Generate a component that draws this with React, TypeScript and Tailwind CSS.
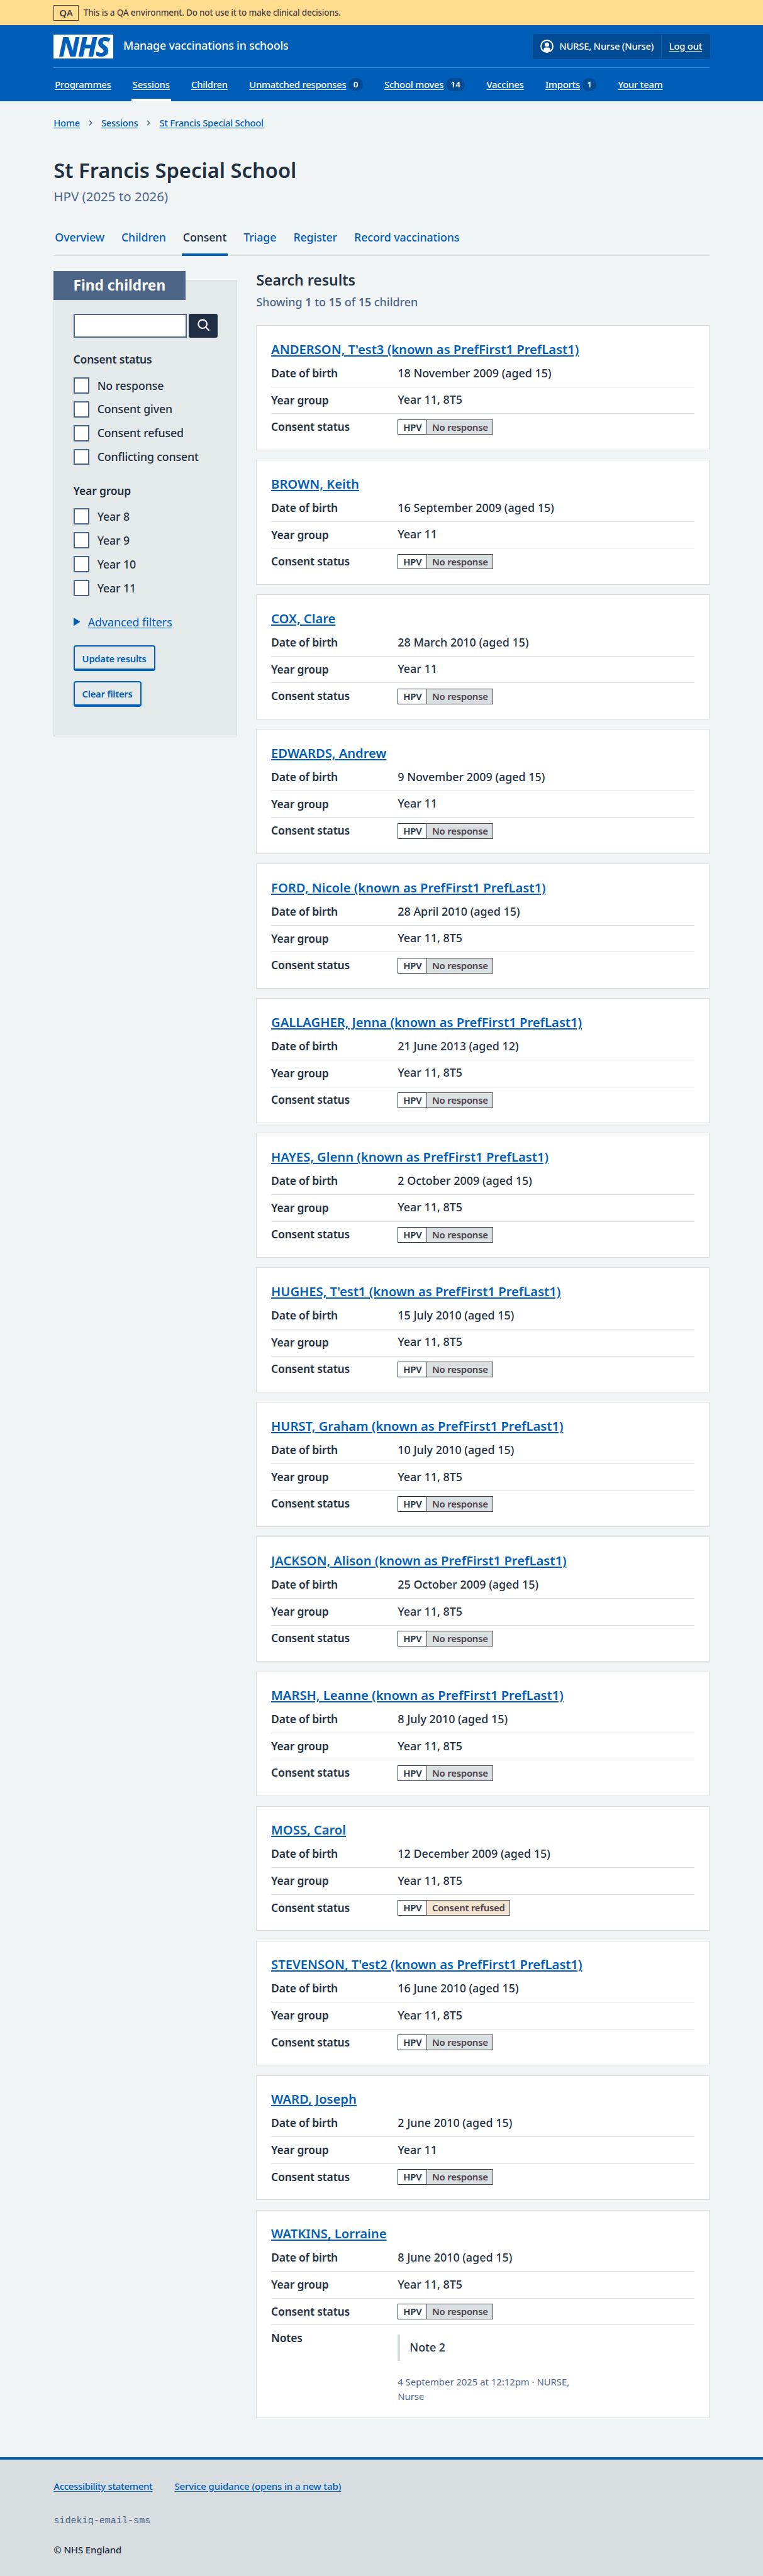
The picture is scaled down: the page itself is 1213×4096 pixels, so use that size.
import type { ReactNode } from "react";

type Child = {
  name: string;
  dob: string;
  year: string;
  status?: "refused";
  note?: { text: string; meta: string };
};

const children: Child[] = [
  { name: "ANDERSON, T'est3 (known as PrefFirst1 PrefLast1)", dob: "18 November 2009 (aged 15)", year: "Year 11, 8T5" },
  { name: "BROWN, Keith", dob: "16 September 2009 (aged 15)", year: "Year 11" },
  { name: "COX, Clare", dob: "28 March 2010 (aged 15)", year: "Year 11" },
  { name: "EDWARDS, Andrew", dob: "9 November 2009 (aged 15)", year: "Year 11" },
  { name: "FORD, Nicole (known as PrefFirst1 PrefLast1)", dob: "28 April 2010 (aged 15)", year: "Year 11, 8T5" },
  { name: "GALLAGHER, Jenna (known as PrefFirst1 PrefLast1)", dob: "21 June 2013 (aged 12)", year: "Year 11, 8T5" },
  { name: "HAYES, Glenn (known as PrefFirst1 PrefLast1)", dob: "2 October 2009 (aged 15)", year: "Year 11, 8T5" },
  { name: "HUGHES, T'est1 (known as PrefFirst1 PrefLast1)", dob: "15 July 2010 (aged 15)", year: "Year 11, 8T5" },
  { name: "HURST, Graham (known as PrefFirst1 PrefLast1)", dob: "10 July 2010 (aged 15)", year: "Year 11, 8T5" },
  { name: "JACKSON, Alison (known as PrefFirst1 PrefLast1)", dob: "25 October 2009 (aged 15)", year: "Year 11, 8T5" },
  { name: "MARSH, Leanne (known as PrefFirst1 PrefLast1)", dob: "8 July 2010 (aged 15)", year: "Year 11, 8T5" },
  { name: "MOSS, Carol", dob: "12 December 2009 (aged 15)", year: "Year 11, 8T5", status: "refused" },
  { name: "STEVENSON, T'est2 (known as PrefFirst1 PrefLast1)", dob: "16 June 2010 (aged 15)", year: "Year 11, 8T5" },
  { name: "WARD, Joseph", dob: "2 June 2010 (aged 15)", year: "Year 11" },
  {
    name: "WATKINS, Lorraine",
    dob: "8 June 2010 (aged 15)",
    year: "Year 11, 8T5",
    note: { text: "Note 2", meta: "4 September 2025 at 12:12pm · NURSE, Nurse" },
  },
];

const navItems: { label: string; count?: string; active?: boolean }[] = [
  { label: "Programmes" },
  { label: "Sessions", active: true },
  { label: "Children" },
  { label: "Unmatched responses", count: "0" },
  { label: "School moves", count: "14" },
  { label: "Vaccines" },
  { label: "Imports", count: "1" },
  { label: "Your team" },
];

const tabs = ["Overview", "Children", "Consent", "Triage", "Register", "Record vaccinations"];

function Container({ children: content, className = "" }: { children: ReactNode; className?: string }) {
  return <div className={`mx-auto w-[1042.4px] ${className}`}>{content}</div>;
}

function Banner() {
  return (
    <div className="h-10 bg-[#ffdc8e] text-[#453f47]">
      <Container className="flex h-full items-center">
        <strong className="flex h-[25px] w-[39.5px] items-center justify-center border border-[#453f47] text-[15px] font-semibold">
          QA
        </strong>
        <span className="ml-2 text-[13.5px] tracking-[-0.18px]">
          This is a QA environment. Do not use it to make clinical decisions.
        </span>
      </Container>
    </div>
  );
}

function Logo() {
  return (
    <div className="flex h-[38px] w-[94.7px] items-center justify-center bg-white text-[43px] leading-none font-extrabold tracking-[-2.5px] text-[#005eb8] italic">
      NHS
    </div>
  );
}

function Header() {
  return (
    <header className="h-[121px] bg-[#005eb8] text-white">
      <Container>
        <div className="flex h-[68px] items-center border-b border-[#3f8fe0]">
          <Logo />
          <span className="-mt-[2px] ml-[16px] text-[17.8px] tracking-[-0.18px]">Manage vaccinations in schools</span>
          <div className="-mr-px ml-auto flex h-10 items-center rounded-[4px] bg-[#004b93] text-[14.8px] tracking-[-0.22px]">
            <svg className="ml-[12.5px] h-[21px] w-[21px]" viewBox="0 0 22 22">
              <circle cx="11" cy="11" r="10" fill="none" stroke="white" strokeWidth="2" />
              <circle cx="11" cy="8.3" r="3.6" fill="white" />
              <path d="M5.6 20V16.4a3.2 3.2 0 0 1 3.2-3.2h4.4a3.2 3.2 0 0 1 3.2 3.2V20L11 21.6z" fill="white" />
            </svg>
            <span className="ml-[9px]">NURSE, Nurse (Nurse)</span>
            <span className="ml-[11.5px] h-[38px] w-px bg-[#005eb8]" />
            <a className="mr-[12.5px] ml-[12px] underline underline-offset-[2px]">Log out</a>
          </div>
        </div>
        <nav className="flex h-[53px] gap-[30.4px] text-[14.8px] tracking-[-0.22px]">
          {navItems.map((item) => (
            <div
              key={item.label}
              className={`flex items-center border-y-4 border-t-transparent px-[2px] ${item.active ? "border-b-white" : "border-b-transparent"}`}
            >
              <a className="underline underline-offset-[2px]">{item.label}</a>
              {item.count && (
                <span className="ml-[4px] flex h-[21px] items-center rounded-full bg-[#004b93] px-[7.3px] text-[13.3px] font-semibold tracking-normal">
                  {item.count}
                </span>
              )}
            </div>
          ))}
        </nav>
      </Container>
    </header>
  );
}

function Breadcrumb() {
  const links = ["Home", "Sessions", "St Francis Special School"];
  return (
    <div className="flex items-center pt-[22px] text-[14.8px] leading-6 tracking-[-0.25px] text-[#005eb8]">
      {links.map((link, i) => (
        <div key={link} className="flex items-center">
          {i > 0 && (
            <svg className="mx-[14px] h-[9px] w-[6px]" viewBox="0 0 6 9">
              <path d="M1.2 .8 4.6 4.5 1.2 8.2" fill="none" stroke="#4c6488" strokeWidth="1.6" />
            </svg>
          )}
          <a className="underline underline-offset-[2px]">{link}</a>
        </div>
      ))}
    </div>
  );
}

function Tabs() {
  return (
    <nav className="mt-[22px] flex h-[59px] gap-[23px] border-b border-[#d8dde0] text-[17.8px] tracking-[-0.1px] text-[#005eb8]">
      {tabs.map((tab) => (
        <a
          key={tab}
          className={`-mb-px flex items-center border-y-4 border-t-transparent px-[2px] ${tab === "Consent" ? "border-b-[#005eb8] text-[#212f42]" : "border-b-transparent"}`}
        >
          {tab}
        </a>
      ))}
    </nav>
  );
}

function CheckboxGroup({ legend, options }: { legend: string; options: string[] }) {
  return (
    <fieldset className="mt-[21.3px]">
      <legend className="text-[17.5px] leading-[26px] font-semibold tracking-[-0.2px]">{legend}</legend>
      <div className="mt-[9.5px]">
        {options.map((option) => (
          <label key={option} className="flex h-[37.9px] items-center text-[17.8px] tracking-[-0.15px]">
            <span className="h-[25.6px] w-[25.6px] border-2 border-[#4d6587] bg-white" />
            <span className="ml-[12.5px]">{option}</span>
          </label>
        ))}
      </div>
    </fieldset>
  );
}

function FilterButton({ children: label, className = "" }: { children: ReactNode; className?: string }) {
  return (
    <button
      className={`flex h-[41.7px] items-center rounded-[4px] border-2 border-b-4 border-[#005eb8] px-[12px] pt-[2px] text-[14.8px] font-semibold tracking-[-0.27px] text-[#005eb8] ${className}`}
    >
      {label}
    </button>
  );
}

function Filters() {
  return (
    <aside className="mt-[14px] flex h-[726px] w-[292px] shrink-0 flex-col items-start border border-[#d8dde0] bg-[#e4e9e9] pl-[30.3px]">
      <h2 className="-mt-[15px] -ml-[31.3px] flex h-[45.5px] w-[209.4px] items-center bg-[#4d6587] pl-[31.3px] text-[22.7px] font-bold text-white">
        Find children
      </h2>
      <div className="mt-[22.7px] flex gap-[3.8px]">
        <input className="h-[38px] w-[180px] border-2 border-[#4d6587] bg-white" />
        <button className="flex h-[38px] w-[45.5px] items-center justify-center rounded-[3px] bg-[#212f45]">
          <svg className="h-[22.7px] w-[22.7px]" viewBox="0 0 24 24" fill="none" stroke="white" strokeWidth="2.3" strokeLinecap="round">
            <circle cx="10.7" cy="8.7" r="7.2" />
            <path d="m16 14 5.3 5.3" />
          </svg>
        </button>
      </div>
      <CheckboxGroup
        legend="Consent status"
        options={["No response", "Consent given", "Consent refused", "Conflicting consent"]}
      />
      <CheckboxGroup legend="Year group" options={["Year 8", "Year 9", "Year 10", "Year 11"]} />
      <div className="mt-[21.7px] flex items-center text-[17.8px] leading-[26px] text-[#005eb8]">
        <svg className="h-[13.3px] w-[10.6px]" viewBox="0 0 11 14">
          <path d="M0 0 11 7 0 14z" fill="#005eb8" />
        </svg>
        <span className="ml-[12.5px] font-normal underline underline-offset-[2px]">Advanced filters</span>
      </div>
      <FilterButton className="mt-[24.2px]">Update results</FilterButton>
      <FilterButton className="mt-[15.2px]">Clear filters</FilterButton>
    </aside>
  );
}

function Row({ label, last = false, children: value }: { label: string; last?: boolean; children: ReactNode }) {
  return (
    <div className={`flex ${last ? "" : "h-[42.6px] border-b border-[#d8dde0]"}`}>
      <dt className="w-[201.2px] shrink-0 pt-[6.8px] text-[17.5px] leading-[26px] font-semibold tracking-[-0.2px]">
        {label}
      </dt>
      <dd className="pt-[6.5px] text-[17.9px] leading-[26px]">{value}</dd>
    </div>
  );
}

function StatusTag({ refused }: { refused: boolean }) {
  return (
    <span className="mt-[2px] flex h-[24.6px] text-[14.9px] leading-[22px] font-semibold tracking-[-0.22px]">
      <span className="border border-r-0 border-[#212f42] bg-white px-[8px]">HPV</span>
      <span className={`border border-[#4a4148] px-[7.6px] text-[#4a4148] ${refused ? "bg-[#f3e3d1]" : "bg-[#dadfe1]"}`}>
        {refused ? "Consent refused" : "No response"}
      </span>
    </span>
  );
}

function ChildCard({ child }: { child: Child }) {
  return (
    <article
      className={`border border-[#d8dde0] bg-white px-[22.7px] pt-[22.6px] ${child.note ? "h-[331.6px]" : "h-[198.9px]"}`}
    >
      <h3 className="text-[20.2px] leading-7 font-semibold text-[#005eb8]">
        <a className="underline decoration-2 underline-offset-[2px]">{child.name}</a>
      </h3>
      <dl className="mt-[4.4px]">
        <Row label="Date of birth">{child.dob}</Row>
        <Row label="Year group">{child.year}</Row>
        <Row label="Consent status" last={!child.note}>
          <StatusTag refused={child.status === "refused"} />
        </Row>
        {child.note && (
          <Row label="Notes" last>
            <blockquote className="mt-[8px] flex h-[41.7px] items-center border-l-4 border-[#d8dde0] pb-[2px] pl-[15px]">
              {child.note.text}
            </blockquote>
            <p className="mt-[22.6px] w-[290px] text-[14.85px] leading-[22.7px] font-normal text-[#4c6488]">
              {child.note.meta}
            </p>
          </Row>
        )}
      </dl>
    </article>
  );
}

function Results() {
  return (
    <section className="w-[720.3px]">
      <h2 className="text-[23px] leading-7 font-semibold">Search results</h2>
      <p className="mt-2 text-[17.9px] leading-[26px] text-[#4c6488]">
        Showing <b className="font-semibold">1</b> to <b className="font-semibold">15</b> of{" "}
        <b className="font-semibold">15</b> children
      </p>
      <div className="mt-[24.2px] flex flex-col gap-[15.15px]">
        {children.map((child) => (
          <ChildCard key={child.name} child={child} />
        ))}
      </div>
    </section>
  );
}

function Footer() {
  return (
    <footer className="mt-auto h-[189.4px] border-t-4 border-[#005eb8] bg-[#d8dde0]">
      <Container className="pt-[31.5px] text-[15px] leading-[23px]">
        <div className="flex gap-[35px] text-[#005eb8]">
          <a className="tracking-[-0.33px] underline underline-offset-[2px]">Accessibility statement</a>
          <a className="tracking-[-0.12px] underline underline-offset-[2px]">Service guidance (opens in a new tab)</a>
        </div>
        <p className="mt-[32px] font-['Liberation_Mono',monospace] text-[15.1px] font-normal text-[#4c6488]">
          sidekiq-email-sms
        </p>
        <p className="mt-[22.6px] tracking-[-0.15px]">© NHS England</p>
      </Container>
    </footer>
  );
}

export default function App() {
  return (
    <div className="flex h-[4096px] flex-col overflow-hidden bg-[#f0f4f5] font-['Noto_Sans',sans-serif] font-medium text-[#212f42]">
      <Banner />
      <Header />
      <Container>
        <Breadcrumb />
        <h1 className="mt-[43.5px] text-[32.7px] leading-10 font-semibold">St Francis Special School</h1>
        <p className="mt-[7.5px] text-[20.5px] leading-7 font-normal text-[#4c6488]">HPV (2025 to 2026)</p>
        <Tabs />
        <div className="mt-6 flex items-start justify-between">
          <Filters />
          <Results />
        </div>
      </Container>
      <Footer />
    </div>
  );
}
